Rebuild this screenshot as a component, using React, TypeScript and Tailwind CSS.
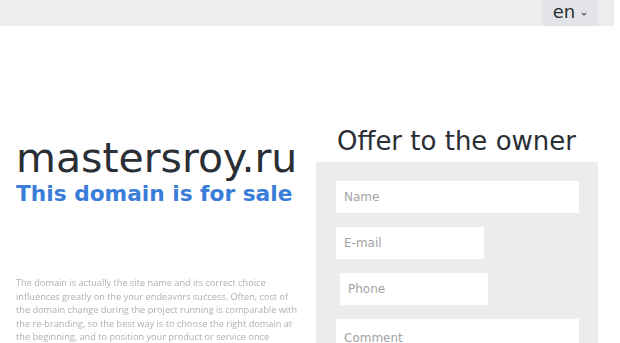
import React from "react";

export default function App() {
  return (
    <div className="w-[620px] h-[343px] overflow-hidden bg-white font-['DejaVu_Sans',sans-serif]">
      <div className="w-[614px] h-[26px] bg-[#ecedef] flex justify-end">
        <button className="w-[56px] h-[26px] mr-[16px] bg-[#e3e4e7] flex items-center justify-center gap-[6px] text-[#2b2f35]">
          <span className="text-[18px] leading-[20px] pb-[3px]">en</span>
          <svg width="6" height="4" viewBox="0 0 6 4" className="mt-[1px]">
            <path d="M0.8 0.8 L3 3 L5.2 0.8" fill="none" stroke="#555" strokeWidth="1.2" />
          </svg>
        </button>
      </div>
      <div className="flex items-start pl-[16px]">
        <div className="w-[300px] pt-[110px]">
          <h1 className="text-[41px] leading-[44px] text-[#2a2e35] font-normal">mastersroy.ru</h1>
          <h2 className="mt-[1px] text-[21.7px] leading-[26px] font-bold text-[#3a7dd8]">This domain is for sale</h2>
          <p className="mt-[69px] text-[9.2px] leading-[13.5px] text-[#b0b0b0] whitespace-nowrap blur-[0.3px] font-['Open_Sans',sans-serif]">
            The domain is actually the site name and its correct choice<br />
            influences greatly on the your endeavors success. Often, cost of<br />
            the domain change during the project running is comparable with<br />
            the re-branding, so the best way is to choose the right domain at<br />
            the beginning, and to position your product or service once<br />
            and for all.
          </p>
        </div>
        <div className="w-[282px] pt-[100px]">
          <h3 className="ml-[21px] text-[26px] leading-[30px] text-[#2a2e35] font-normal">Offer to the owner</h3>
          <div className="mt-[6px] bg-[#ebecee] pt-[19px] pl-[20px] pb-[20px] flex flex-col gap-[14px]">
            <input
              placeholder="Name"
              className="w-[243px] h-[32px] bg-white px-[8px] text-[12px] text-[#333] placeholder:text-[#a3a3a3] outline-none"
            />
            <input
              placeholder="E-mail"
              className="w-[148px] h-[32px] bg-white px-[8px] text-[12px] text-[#333] placeholder:text-[#a3a3a3] outline-none"
            />
            <input
              placeholder="Phone"
              className="ml-[4px] w-[148px] h-[32px] bg-white px-[8px] text-[12px] text-[#333] placeholder:text-[#a3a3a3] outline-none"
            />
            <textarea
              placeholder="Comment"
              className="w-[243px] h-[60px] bg-white px-[8px] pt-[12px] text-[12px] leading-[14px] text-[#333] placeholder:text-[#a3a3a3] outline-none resize-none"
            />
          </div>
        </div>
      </div>
    </div>
  );
}
